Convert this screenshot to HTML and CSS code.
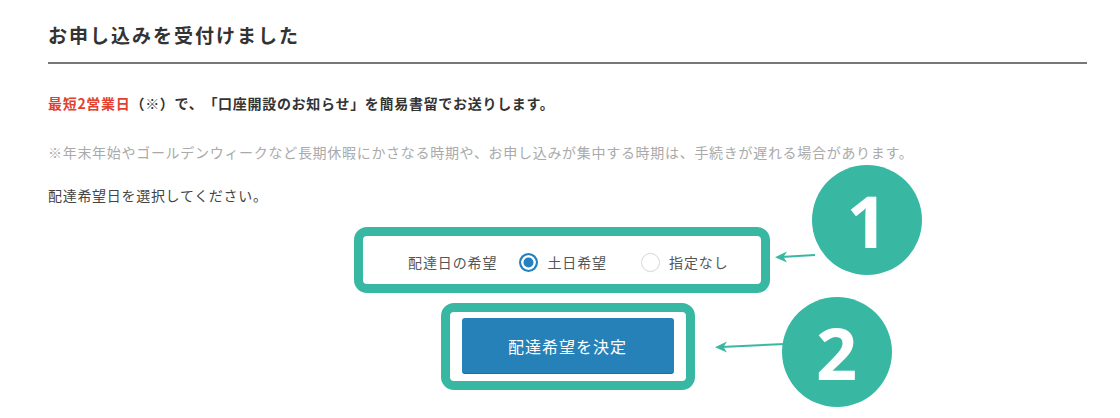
FILE: index.html
```html
<!DOCTYPE html>
<html lang="ja">
  <head>
    <meta charset="UTF-8" />
    <meta name="viewport" content="width=device-width, initial-scale=1.0" />
    <title>お申し込みを受付けました</title>
    <link rel="stylesheet" href="styles.css">
  </head>
  <body>
    <div class="page">
      <h2 class="title">お申し込みを受付けました</h2>

      <p class="lead"><span class="red">最短2営業日</span>（※）で、「口座開設のお知らせ」を簡易書留でお送りします。</p>
      <p class="note">※年末年始やゴールデンウィークなど長期休暇にかさなる時期や、お申し込みが集中する時期は、手続きが遅れる場合があります。</p>
      <p class="ask">配達希望日を選択してください。</p>

      <div class="choose">
        <div class="callout callout-choice">
          <div class="choice">
            <span class="choice-label">配達日の希望</span>
            <label class="radio">
              <span class="dot dot-on"></span>
              <span>土日希望</span>
            </label>
            <label class="radio">
              <span class="dot"></span>
              <span>指定なし</span>
            </label>
          </div>

          <svg class="arrow arrow-1" width="40" height="14" viewBox="0 0 40 14">
            <line x1="6" y1="8" x2="40" y2="6" stroke="#38b8a3" stroke-width="2" />
            <path d="M0,8.2 L12,2.5 L8.5,8 L12,13.5 Z" fill="#38b8a3" />
          </svg>
          <div class="badge badge-1">1</div>
        </div>

        <div class="callout callout-btn">
          <button type="button" class="decide">配達希望を決定</button>

          <svg class="arrow arrow-2" width="70" height="14" viewBox="0 0 70 14">
            <line x1="6" y1="8" x2="70" y2="5" stroke="#38b8a3" stroke-width="2" />
            <path d="M0,8.3 L12,2.6 L8.5,8.1 L12,13.6 Z" fill="#38b8a3" />
          </svg>
          <div class="badge badge-2">2</div>
        </div>
      </div>
    </div>
  </body>
</html>
```

FILE: styles.css
```css
body {
  margin: 0;
  background-color: #ffffff;
  font-family: "Noto Sans CJK JP", "Noto Sans", sans-serif;
  color: #444;
  text-spacing-trim: space-all;
}

.page {
  padding: 22px 33px 28px 48px;
}

.title {
  margin: 0;
  padding-bottom: 14px;
  border-bottom: 2px solid #777;
  font-size: 19px;
  line-height: 26px;
  letter-spacing: 2px;
  font-weight: bold;
  color: #333;
}

.lead,
.note,
.ask {
  margin: 0;
  font-size: 14px;
  line-height: 20px;
  letter-spacing: 0.7px;
}

.lead {
  margin-top: 29px;
  font-weight: bold;
  color: #333;
}

.red {
  color: #e2412f;
}

.note {
  margin-top: 29px;
  color: #aaa;
}

.ask {
  margin-top: 23px;
  color: #444;
}

.choose {
  display: flex;
  flex-direction: column;
  align-items: center;
  gap: 10px;
  margin-top: 22px;
}

.callout {
  position: relative;
  border: 9px solid #38b8a3;
  border-radius: 13px;
  background-color: #ffffff;
}

.callout-choice {
  width: 398px;
  height: 48px;
  margin-right: 11px;
}

.choice {
  display: flex;
  align-items: center;
  height: 100%;
  padding: 4px 0 0 45px;
  box-sizing: border-box;
  font-size: 14px;
  letter-spacing: 0.9px;
  white-space: nowrap;
  color: #555;
}

.choice-label {
  margin-right: 22px;
}

.radio {
  display: flex;
  align-items: center;
  flex-shrink: 0;
  gap: 9px;
  margin-right: 34px;
}

.radio:last-child {
  margin-right: 0;
}

.dot {
  flex-shrink: 0;
  width: 17px;
  height: 17px;
  border: 1.5px solid #d6d6d6;
  border-radius: 50%;
  background-color: #ffffff;
}

.dot-on {
  border: 2.5px solid #2680bf;
  width: 15px;
  height: 15px;
  box-shadow: inset 0 0 0 2.5px #ffffff;
  background-color: #2680bf;
}

.callout-btn {
  padding: 6px 12px 7px 12px;
}

.decide {
  display: block;
  width: 212px;
  height: 56px;
  border: none;
  border-bottom: 1px solid #1f6ea3;
  border-radius: 3px;
  background-color: #2581b8;
  color: #ffffff;
  font-family: "Noto Sans CJK JP", sans-serif;
  font-size: 16px;
  letter-spacing: 1px;
  cursor: pointer;
}

/* annotation overlays */
.arrow {
  position: absolute;
}

.arrow-1 {
  left: 412px;
  top: 13px;
}

.arrow-2 {
  left: 265px;
  top: 27px;
}

.badge {
  position: absolute;
  width: 110px;
  height: 110px;
  border-radius: 50%;
  background-color: #38b8a3;
  color: #ffffff;
  font-family: "Open Sans", sans-serif;
  font-weight: bold;
  font-size: 72px;
  line-height: 110px;
  text-align: center;
}

.badge-1 {
  left: 449px;
  top: -71px;
}

.badge-2 {
  left: 332px;
  top: -15px;
}
```
